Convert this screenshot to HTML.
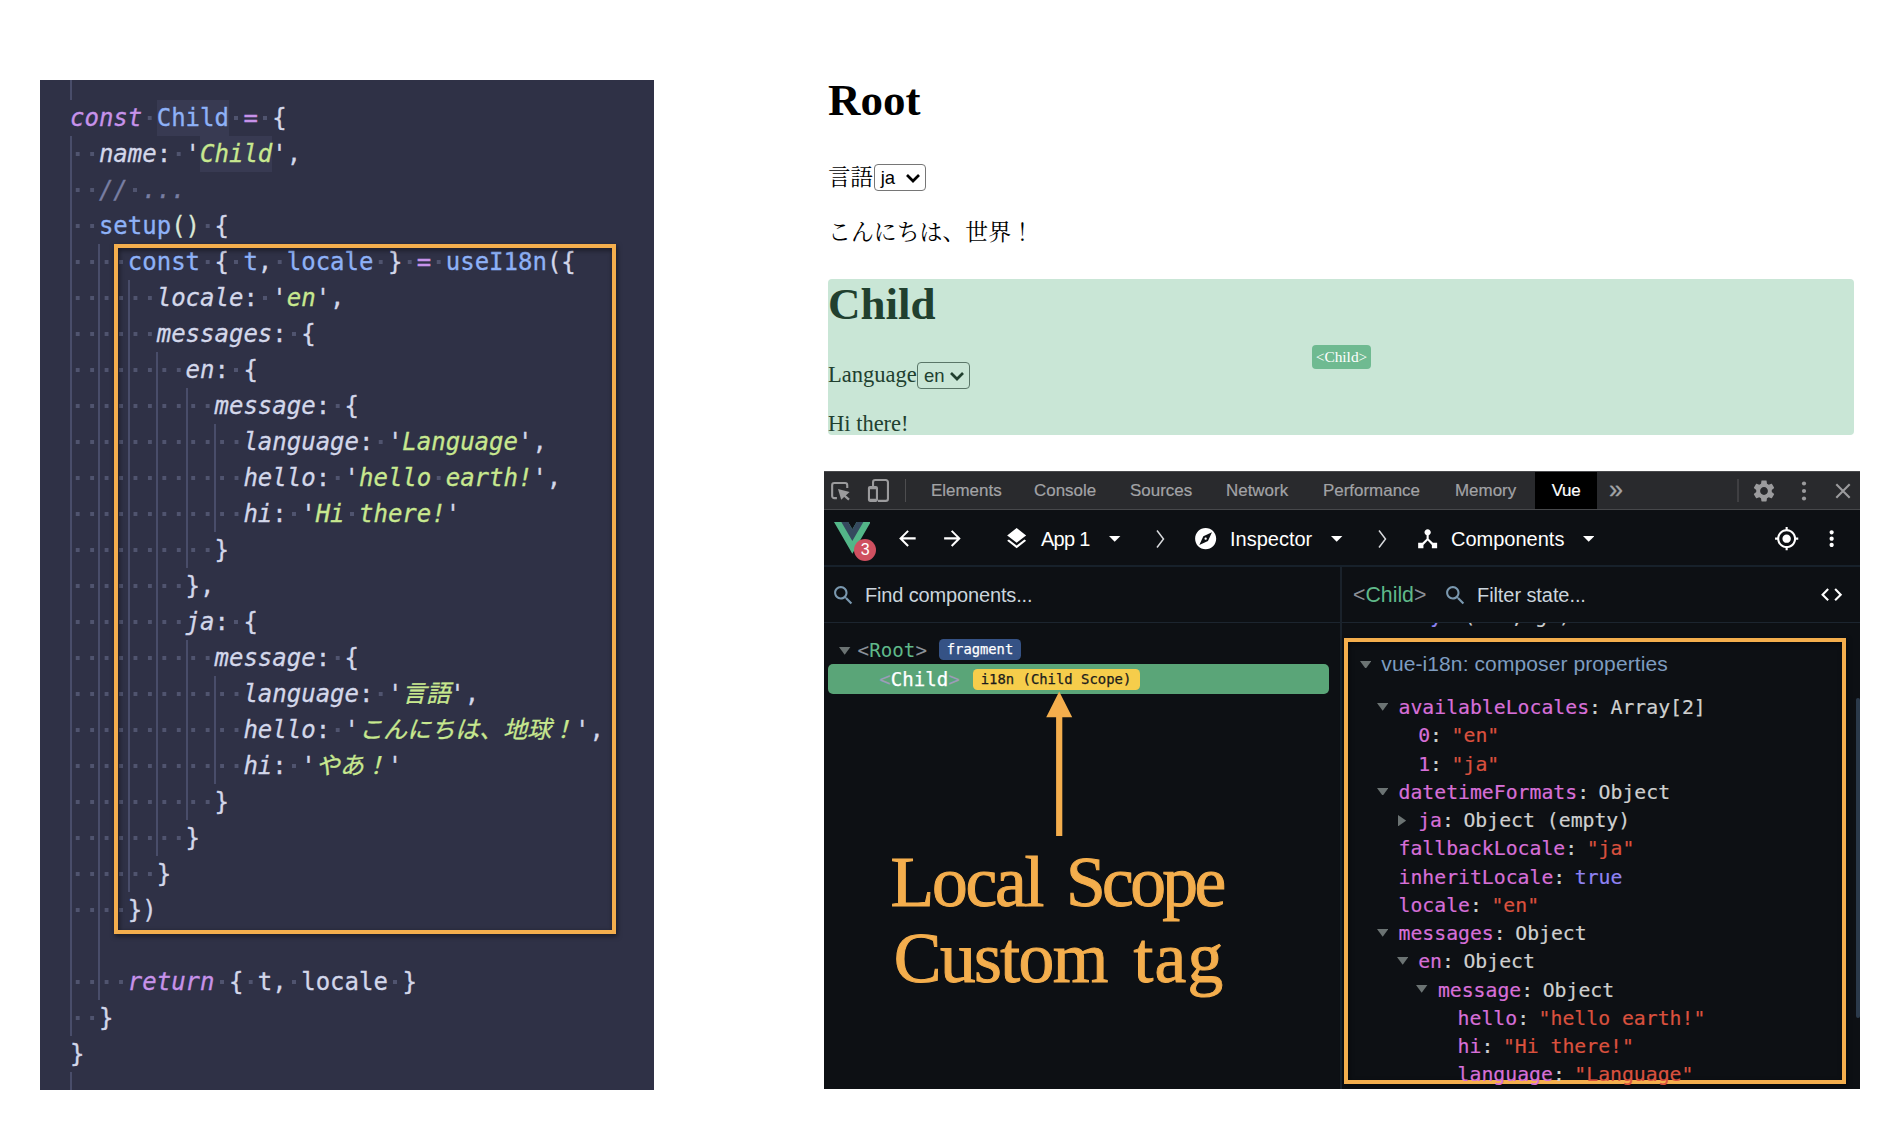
<!DOCTYPE html>
<html lang="en">
<head>
<meta charset="utf-8">
<title>Local Scope Custom tag</title>
<style>
html,body{margin:0;padding:0;background:#fff;}
body{width:1894px;height:1122px;position:relative;overflow:hidden;font-family:"Liberation Sans","Noto Sans CJK JP",sans-serif;}
*{box-sizing:border-box;}
.abs{position:absolute;}
/* ---------- code editor ---------- */
#code{position:absolute;left:40px;top:80px;width:614px;height:1010px;background:#2f3146;overflow:hidden;
  font-family:"DejaVu Sans Mono","Noto Sans CJK JP",monospace;font-size:24px;line-height:36px;color:#d3d7ea;}
#code .ln{position:absolute;left:30px;height:36px;white-space:pre;-webkit-text-stroke-width:0.3px;}
#code .g{position:absolute;width:1.8px;background:#494d6a;display:block;}
#code .d{background:linear-gradient(90deg,transparent 5.3px,#50546f 5.3px,#50546f 9.15px,transparent 9.15px) 0 11.7px / 14.449px 3.9px repeat-x;}
#code .k{color:#c792ea;font-style:italic;}
#code .p{color:#c792ea;}
#code .b{color:#8eb1f7;}
#code .w{color:#d3d7ea;}
#code .i{color:#d3d7ea;font-style:italic;}
#code .s{color:#c8e88f;font-style:italic;}
#code .c{color:#787ea2;font-style:italic;}
#code .pa{color:#dbe8d6;}
#code .hl{background:#383a52;padding:4px 0;}
#code .j{font-size:24px;}
#cbox{position:absolute;left:114px;top:244.3px;width:502px;height:690px;border:4px solid #f4ae4d;filter:drop-shadow(1px 2px 2.5px rgba(0,0,0,.55));}
/* ---------- web page ---------- */
#web{position:absolute;left:828px;top:0;width:1026px;font-family:"Liberation Serif","Noto Serif CJK JP","Noto Serif CJK SC",serif;color:#000;font-size:22.5px;}
#web h1{position:absolute;margin:0;font-size:45px;font-weight:bold;line-height:56px;left:0;}
#web .t{position:absolute;left:0;white-space:nowrap;line-height:30px;}
.sel{position:absolute;width:51.5px;height:26.5px;border:1.5px solid #767676;border-radius:4px;background:#fff;font-family:"Liberation Sans",sans-serif;font-size:18.5px;line-height:25px;color:#000;padding-left:5.5px;}
.sel svg{position:absolute;right:4px;top:7.5px;}
#childbg{position:absolute;left:0;top:279px;width:1026px;height:156px;background:#c9e6d6;border-radius:4px;}
#cbadge{position:absolute;left:484px;top:345px;width:59px;height:24px;background:#6fba91;border-radius:4px;color:#fff;font-size:15.4px;line-height:23px;text-align:center;}
/* ---------- devtools ---------- */
#dt{position:absolute;left:824px;top:471px;width:1036px;height:618px;background:#0d1014;overflow:hidden;color:#fff;}
#tabs{position:absolute;left:0;top:0;width:1036px;height:39px;background:#292a2d;border-bottom:1.5px solid #47484b;font-size:16.95px;color:#a2a3a6;box-shadow:inset 0 1px 0 #48494c;}
#tabs span{-webkit-text-stroke-width:0.2px;position:absolute;top:1.3px;line-height:38px;white-space:nowrap;}
#vtb{position:absolute;left:0;top:39px;width:1036px;height:56.8px;border-bottom:2px solid #17212b;font-size:20px;}
#vtb span{position:absolute;top:1px;line-height:56px;white-space:nowrap;color:#fff;}
#srow{position:absolute;left:0;top:96px;width:1036px;height:56px;border-bottom:1.5px solid #1c252f;font-size:20px;}
#srow span{position:absolute;top:0;line-height:56px;white-space:nowrap;}
#vdiv{position:absolute;left:516px;top:96px;width:2px;height:522px;background:#1a222b;}
.mono{font-family:"DejaVu Sans Mono",monospace;}
#tree{position:absolute;left:0;top:152px;width:516px;height:466px;}
#state{position:absolute;left:518px;top:152px;width:518px;height:466px;overflow:hidden;font-family:"DejaVu Sans Mono",monospace;font-size:19.8px;}
#state .co{margin-right:-2.4px;}
#state .r{position:absolute;white-space:pre;line-height:28px;height:28px;color:#cfd0d0;-webkit-text-stroke-width:0.2px;}
#state .ky{color:#d76fd8;}
#state .st{color:#da513e;}
#state .lt{color:#8f83f2;}
#state .tr{position:absolute;width:0;height:0;border-left:6.5px solid transparent;border-right:6.5px solid transparent;border-top:9px solid #6b7373;}
#state .trr{position:absolute;width:0;height:0;border-top:6.5px solid transparent;border-bottom:6.5px solid transparent;border-left:9px solid #6b7373;}
#sbox{position:absolute;left:520px;top:167px;width:501.6px;height:446px;border:4px solid #f4ae4d;filter:drop-shadow(1px 2px 2.5px rgba(0,0,0,.55));}
.anno{position:absolute;font-family:"Liberation Serif",serif;color:#f4ae4d;font-size:71.5px;line-height:76px;white-space:nowrap;-webkit-text-stroke:1px #f4ae4d;}
</style>
</head>
<body>

<!-- ================= code editor ================= -->
<div id="code">
<i class="g" style="left:30.0px;top:0px;height:20px"></i>
<i class="g" style="left:30.0px;top:56px;height:900px"></i>
<i class="g" style="left:30.0px;top:992px;height:20px"></i>
<i class="g" style="left:58.0px;top:164px;height:756px"></i>
<i class="g" style="left:88.1px;top:200px;height:612px"></i>
<i class="g" style="left:116.3px;top:272px;height:504px"></i>
<i class="g" style="left:146.2px;top:308px;height:180px"></i>
<i class="g" style="left:174.2px;top:344px;height:108px"></i>
<i class="g" style="left:146.2px;top:560px;height:180px"></i>
<i class="g" style="left:174.2px;top:596px;height:108px"></i>
<div class="ln" style="top:20px"><span class="k">const</span><span class="d"> </span><span class="b hl">Child</span><span class="d"> </span><span class="p">=</span><span class="d"> </span><span class="w">{</span></div>
<div class="ln" style="top:56px"><span class="d">  </span><span class="i">name</span><span class="w">:</span><span class="d"> </span><span class="w">'</span><span class="s hl">Child</span><span class="w">',</span></div>
<div class="ln" style="top:92px"><span class="d">  </span><span class="c">//</span><span class="d"> </span><span class="c">...</span></div>
<div class="ln" style="top:128px"><span class="d">  </span><span class="b">setup</span><span class="pa">()</span><span class="d"> </span><span class="w">{</span></div>
<div class="ln" style="top:164px"><span class="d">    </span><span class="b">const</span><span class="d"> </span><span class="w">{</span><span class="d"> </span><span class="b">t</span><span class="w">,</span><span class="d"> </span><span class="b">locale</span><span class="d"> </span><span class="w">}</span><span class="d"> </span><span class="p">=</span><span class="d"> </span><span class="b">useI18n</span><span class="w">({</span></div>
<div class="ln" style="top:200px"><span class="d">      </span><span class="i">locale</span><span class="w">:</span><span class="d"> </span><span class="w">'</span><span class="s">en</span><span class="w">',</span></div>
<div class="ln" style="top:236px"><span class="d">      </span><span class="i">messages</span><span class="w">:</span><span class="d"> </span><span class="w">{</span></div>
<div class="ln" style="top:272px"><span class="d">        </span><span class="i">en</span><span class="w">:</span><span class="d"> </span><span class="w">{</span></div>
<div class="ln" style="top:308px"><span class="d">          </span><span class="i">message</span><span class="w">:</span><span class="d"> </span><span class="w">{</span></div>
<div class="ln" style="top:344px"><span class="d">            </span><span class="i">language</span><span class="w">:</span><span class="d"> </span><span class="w">'</span><span class="s">Language</span><span class="w">',</span></div>
<div class="ln" style="top:380px"><span class="d">            </span><span class="i">hello</span><span class="w">:</span><span class="d"> </span><span class="w">'</span><span class="s">hello</span><span class="d"> </span><span class="s">earth!</span><span class="w">',</span></div>
<div class="ln" style="top:416px"><span class="d">            </span><span class="i">hi</span><span class="w">:</span><span class="d"> </span><span class="w">'</span><span class="s">Hi</span><span class="d"> </span><span class="s">there!</span><span class="w">'</span></div>
<div class="ln" style="top:452px"><span class="d">          </span><span class="w">}</span></div>
<div class="ln" style="top:488px"><span class="d">        </span><span class="w">},</span></div>
<div class="ln" style="top:524px"><span class="d">        </span><span class="i">ja</span><span class="w">:</span><span class="d"> </span><span class="w">{</span></div>
<div class="ln" style="top:560px"><span class="d">          </span><span class="i">message</span><span class="w">:</span><span class="d"> </span><span class="w">{</span></div>
<div class="ln" style="top:596px"><span class="d">            </span><span class="i">language</span><span class="w">:</span><span class="d"> </span><span class="w">'</span><span class="s j">言語</span><span class="w">',</span></div>
<div class="ln" style="top:632px"><span class="d">            </span><span class="i">hello</span><span class="w">:</span><span class="d"> </span><span class="w">'</span><span class="s j">こんにちは、地球！</span><span class="w">',</span></div>
<div class="ln" style="top:668px"><span class="d">            </span><span class="i">hi</span><span class="w">:</span><span class="d"> </span><span class="w">'</span><span class="s j">やあ！</span><span class="w">'</span></div>
<div class="ln" style="top:704px"><span class="d">          </span><span class="w">}</span></div>
<div class="ln" style="top:740px"><span class="d">        </span><span class="w">}</span></div>
<div class="ln" style="top:776px"><span class="d">      </span><span class="w">}</span></div>
<div class="ln" style="top:812px"><span class="d">    </span><span class="w">})</span></div>
<div class="ln" style="top:848px"></div>
<div class="ln" style="top:884px"><span class="d">    </span><span class="k">return</span><span class="d"> </span><span class="w">{</span><span class="d"> </span><span class="w">t,</span><span class="d"> </span><span class="w">locale</span><span class="d"> </span><span class="w">}</span></div>
<div class="ln" style="top:920px"><span class="d">  </span><span class="w">}</span></div>
<div class="ln" style="top:956px"><span class="w">}</span></div>
</div>
<div id="cbox"></div>

<!-- ================= web page ================= -->
<div id="web">
  <h1 style="top:72.4px">Root</h1>
  <div class="t" style="top:163px">言語</div>
  <div class="sel" style="left:46.2px;top:164.3px">ja<svg width="16" height="10" viewBox="0 0 16 10"><path d="M2 2 L8 8 L14 2" fill="none" stroke="#000" stroke-width="2.7"/></svg></div>
  <div class="t" style="top:218.4px;font-size:22.9px">こんにちは、世界！</div>
  <div id="childbg"></div>
  <h1 style="top:276px;color:#21402f">Child</h1>
  <div class="t" style="top:359.8px;color:#21402f">Language</div>
  <div class="sel" style="left:89.4px;top:362.2px;width:52.2px;background:#c9e6d6;border-color:#5a7668;color:#21402f">en<svg width="16" height="10" viewBox="0 0 16 10"><path d="M2 2 L8 8 L14 2" fill="none" stroke="#21402f" stroke-width="2.7"/></svg></div>
  <div class="t" style="top:409.4px;color:#21402f">Hi there!</div>
  <div id="cbadge">&lt;Child&gt;</div>
</div>

<!-- ================= devtools ================= -->
<div id="dt">
  <div id="tabs">

    <svg class="abs" style="left:0;top:0" width="100" height="39" viewBox="0 0 100 39" fill="none" stroke="#9b9b9d" stroke-width="2.1"><path d="M12.9 27.15H10.3A2.15 2.15 0 0 1 8.15 25V14.2A2.15 2.15 0 0 1 10.3 12.05H21.1A2.15 2.15 0 0 1 23.25 14.2V16.9"/><path d="M14 18L25.6 21.1L17.2 28.8Z" fill="#9b9b9d" stroke="none"/><path d="M20.4 24.6L25 28.6" stroke-width="2.3"/><path d="M49.05 15V11.2A2.15 2.15 0 0 1 51.2 9.05H61.8A2.15 2.15 0 0 1 63.95 11.2V27.7A2.15 2.15 0 0 1 61.8 29.85H54"/><path d="M46 15H51.9A2.1 2.1 0 0 1 54 17.1V28.8A2.1 2.1 0 0 1 51.9 30.9H46A2.1 2.1 0 0 1 43.9 28.8V17.1A2.1 2.1 0 0 1 46 15ZM46 18.2V27.7H51.9V18.2Z" fill="#9b9b9d" fill-rule="evenodd" stroke="none"/></svg>
    <i class="abs" style="left:80.8px;top:8.2px;width:1.4px;height:22.7px;background:#4d4d4f"></i>
    <i class="abs" style="left:913.2px;top:8.2px;width:1.4px;height:22.7px;background:#3f3f42"></i>
    <svg class="abs" style="left:927px;top:7px" width="26" height="26" viewBox="0 0 24 24" fill="#9b9b9d"><path d="M19.14 12.94c.04-.3.06-.61.06-.94 0-.32-.02-.64-.07-.94l2.03-1.58c.18-.14.23-.41.12-.61l-1.92-3.32c-.12-.22-.37-.29-.59-.22l-2.39.96c-.5-.38-1.03-.7-1.62-.94l-.36-2.54c-.04-.24-.24-.41-.48-.41h-3.84c-.24 0-.43.17-.47.41l-.36 2.54c-.59.24-1.13.57-1.62.94l-2.39-.96c-.22-.08-.47 0-.59.22L2.74 8.87c-.12.21-.08.47.12.61l2.03 1.58c-.05.3-.09.63-.09.94s.02.64.07.94l-2.03 1.58c-.18.14-.23.41-.12.61l1.92 3.32c.12.22.37.29.59.22l2.39-.96c.5.38 1.03.7 1.62.94l.36 2.54c.05.24.24.41.48.41h3.84c.24 0 .44-.17.47-.41l.36-2.54c.59-.24 1.13-.56 1.62-.94l2.39.96c.22.08.47 0 .59-.22l1.92-3.32c.12-.22.07-.47-.12-.61l-2.01-1.58zM12 15.6c-1.98 0-3.6-1.62-3.6-3.6s1.62-3.6 3.6-3.6 3.6 1.62 3.6 3.6-1.62 3.6-3.6 3.6z"/></svg>
    <svg class="abs" style="left:975px;top:9px" width="10" height="22" viewBox="0 0 10 22" fill="#9b9b9d"><circle cx="5" cy="3.5" r="2.1"/><circle cx="5" cy="11" r="2.1"/><circle cx="5" cy="18.5" r="2.1"/></svg>
    <svg class="abs" style="left:1010px;top:11px" width="18" height="18" viewBox="0 0 18 18" fill="none" stroke="#9b9b9d" stroke-width="2.1"><path d="M2.3 2.3L15.7 15.7M15.7 2.3L2.3 15.7"/></svg>
    <span style="left:107px">Elements</span>
    <span style="left:210px">Console</span>
    <span style="left:306px">Sources</span>
    <span style="left:402px">Network</span>
    <span style="left:499px">Performance</span>
    <span style="left:631px">Memory</span>
    <i class="abs" style="left:711px;top:1px;width:62px;height:37px;background:#000"></i><span style="left:711px;width:62px;color:#fff;text-align:center;letter-spacing:-0.35px">Vue</span>
    <span style="left:785px;font-size:25px;line-height:34px;-webkit-text-stroke:0.3px #a2a3a6">»</span>
  </div>
  <svg class="abs" style="left:9.7px;top:51px" width="36.7" height="31.8" viewBox="0 0 261.76 226.69"><path d="M161.096.001l-30.225 52.351L100.647.001H-.005l130.877 226.688L261.749.001z" fill="#53b688"/><path d="M161.096.001l-30.225 52.351L100.647.001H52.346l78.526 136.01L209.398.001z" fill="#35495e"/></svg>
<div class="abs" style="left:30.2px;top:68.2px;width:22px;height:22px;border-radius:11px;background:#cf5060;color:#fff;font-size:16px;line-height:22px;text-align:center">3</div>
<svg class="abs" style="left:71.3px;top:55.4px" width="24.8" height="24.8" viewBox="0 0 24 24" fill="#fff"><path d="M20 11H7.83l5.59-5.59L12 4l-8 8 8 8 1.41-1.41L7.83 13H20v-2z"/></svg>
<svg class="abs" style="left:116.1px;top:55.4px" width="24.8" height="24.8" viewBox="0 0 24 24" fill="#fff"><path d="M12 4l-1.41 1.41L16.17 11H4v2h12.17l-5.58 5.59L12 20l8-8z"/></svg>
<svg class="abs" style="left:179.6px;top:54.9px" width="25.3" height="25.3" viewBox="0 0 24 24" fill="#fff"><path d="M11.99 18.54l-7.37-5.73L3 14.07l9 7 9-7-1.63-1.27-7.38 5.74zM12 16l7.36-5.73L21 9l-9-7-9 7 1.63 1.27L12 16z"/></svg>
<svg class="abs" style="left:285.3px;top:65.1px" width="11.4" height="5.8" viewBox="0 0 10 5" preserveAspectRatio="none" fill="#fff"><path d="M0 0H10L5 5Z"/></svg>
<svg class="abs" style="left:331.0px;top:57.8px" width="10" height="20" viewBox="0 0 10 20" fill="none" stroke="#d8dadd" stroke-width="1.5"><path d="M2 1.5L8.5 10L2 18.5"/></svg>
<svg class="abs" style="left:369.1px;top:55.1px" width="25.3" height="25.3" viewBox="0 0 24 24" fill="#fff"><path d="M12 10.9c-.61 0-1.1.49-1.1 1.1s.49 1.1 1.1 1.1c.61 0 1.1-.49 1.1-1.1s-.49-1.1-1.1-1.1zM12 2C6.48 2 2 6.48 2 12s4.48 10 10 10 10-4.48 10-10S17.52 2 12 2zm2.19 12.19L6 18l3.81-8.19L18 6l-3.81 8.19z"/></svg>
<svg class="abs" style="left:507.3px;top:65.1px" width="11.4" height="5.8" viewBox="0 0 10 5" preserveAspectRatio="none" fill="#fff"><path d="M0 0H10L5 5Z"/></svg>
<svg class="abs" style="left:552.5px;top:57.8px" width="10" height="20" viewBox="0 0 10 20" fill="none" stroke="#d8dadd" stroke-width="1.5"><path d="M2 1.5L8.5 10L2 18.5"/></svg>
<svg class="abs" style="left:590.9px;top:55.1px" width="25.3" height="25.3" viewBox="0 0 24 24" fill="#fff"><path d="M17 16l-4-4V8.82C14.16 8.4 15 7.3 15 6c0-1.66-1.34-3-3-3S9 4.34 9 6c0 1.3.84 2.4 2 2.82V12l-4 4H3v5h5v-3.05l4-4.2 4 4.2V21h5v-5h-4z"/></svg>
<svg class="abs" style="left:758.7px;top:65.1px" width="11.4" height="5.8" viewBox="0 0 10 5" preserveAspectRatio="none" fill="#fff"><path d="M0 0H10L5 5Z"/></svg>
<svg class="abs" style="left:949.9px;top:54.9px" width="25.3" height="25.3" viewBox="0 0 24 24" fill="#fff"><path d="M12 8c-2.21 0-4 1.79-4 4s1.79 4 4 4 4-1.79 4-4-1.79-4-4-4zm8.94 3c-.46-4.17-3.77-7.48-7.94-7.94V1h-2v2.06C6.83 3.52 3.52 6.83 3.06 11H1v2h2.06c.46 4.17 3.77 7.48 7.94 7.94V23h2v-2.06c4.17-.46 7.48-3.77 7.94-7.94H23v-2h-2.06zM12 19c-3.87 0-7-3.13-7-7s3.13-7 7-7 7 3.13 7 7-3.13 7-7 7z"/></svg>
<svg class="abs" style="left:994.9px;top:54.9px" width="25.3" height="25.3" viewBox="0 0 24 24" fill="#fff"><path d="M12 8c1.1 0 2-.9 2-2s-.9-2-2-2-2 .9-2 2 .9 2 2 2zm0 2c-1.1 0-2 .9-2 2s.9 2 2 2 2-.9 2-2-.9-2-2-2zm0 6c-1.1 0-2 .9-2 2s.9 2 2 2 2-.9 2-2-.9-2-2-2z"/></svg>
  <div id="vtb">
    <span style="left:217px;letter-spacing:-0.75px">App 1</span>
    <span style="left:406px">Inspector</span>
    <span style="left:627px">Components</span>
  </div>
  <div id="srow">
    <span style="left:41px;color:#cbd5dd;letter-spacing:-0.15px">Find components...</span>
    <span style="left:529px;color:#8a8f96;font-size:21.3px">&lt;<b style="font-weight:normal;color:#5fb98a">Child</b>&gt;</span>
    <span style="left:653px;color:#cbd5dd;letter-spacing:-0.08px">Filter state...</span>
  </div>
  <svg class="abs" style="left:6.8px;top:111.9px" width="24.8" height="24.8" viewBox="0 0 24 24" fill="#7a98af"><path d="M15.5 14h-.79l-.28-.27C15.41 12.59 16 11.11 16 9.5 16 5.91 13.09 3 9.5 3S3 5.91 3 9.5 5.91 16 9.5 16c1.61 0 3.09-.59 4.23-1.57l.27.28v.79l5 4.99L20.49 19l-4.99-5zm-6 0C7.01 14 5 11.99 5 9.5S7.01 5 9.5 5 14 7.01 14 9.5 11.99 14 9.5 14z"/></svg>
<svg class="abs" style="left:618.8px;top:111.9px" width="24.8" height="24.8" viewBox="0 0 24 24" fill="#7a98af"><path d="M15.5 14h-.79l-.28-.27C15.41 12.59 16 11.11 16 9.5 16 5.91 13.09 3 9.5 3S3 5.91 3 9.5 5.91 16 9.5 16c1.61 0 3.09-.59 4.23-1.57l.27.28v.79l5 4.99L20.49 19l-4.99-5zm-6 0C7.01 14 5 11.99 5 9.5S7.01 5 9.5 5 14 7.01 14 9.5 11.99 14 9.5 14z"/></svg>
<svg class="abs" style="left:994.9px;top:111.1px" width="25.3" height="25.3" viewBox="0 0 24 24" fill="#fff"><path d="M9.4 16.6L4.8 12l4.6-4.6L8 6l-6 6 6 6 1.4-1.4zm5.2 0l4.6-4.6-4.6-4.6L16 6l6 6-6 6-1.4-1.4z"/></svg>
  <div id="vdiv"></div>
  <div id="tree">
    <svg class="abs" style="left:15.4px;top:23.8px" width="11.4" height="7.8" viewBox="0 0 10 7" preserveAspectRatio="none" fill="#6b7373"><path d="M0 0H10L5 7Z"/></svg>
    <span class="abs mono" style="left:33.6px;top:14px;font-size:19.2px;line-height:28px;color:#8a9199;white-space:pre">&lt;<b style="font-weight:normal;color:#5fb98a">Root</b>&gt;</span>
    <span class="abs mono" style="left:115px;top:16px;width:82px;height:21px;border-radius:4.5px;background:#355285;color:#fff;-webkit-text-stroke:0.25px #fff;font-size:13.8px;line-height:21px;text-align:center">fragment</span>
    <div class="abs" style="left:4px;top:41px;width:501px;height:30px;border-radius:5px;background:#5aa578"></div>
    <span class="abs mono" style="left:55.3px;top:42px;font-size:19.1px;line-height:30px;color:#fff;white-space:pre;-webkit-text-stroke:0.25px #fff"><b style="font-weight:normal;color:#9c9cb8;-webkit-text-stroke:0">&lt;</b>Child<b style="font-weight:normal;color:#9c9cb8;-webkit-text-stroke:0">&gt;</b></span>
    <span class="abs mono" style="left:148.5px;top:46px;width:167px;height:21px;border-radius:4.5px;background:#f6cd4b;color:#1c1c1c;-webkit-text-stroke:0.25px #1c1c1c;font-size:13.9px;line-height:21px;text-align:center">i18n (Child Scope)</span>
    <svg class="abs" style="left:215px;top:68px" width="40" height="146" viewBox="0 0 40 146"><path d="M20.2 0.5L33.2 26.3H23.3V145H17.1V26.3H7.2Z" fill="#f4ae4d"/></svg>
  </div>
  <div id="sbox"></div>
  <div id="state">
<div class="r" style="left:52.5px;top:-20.4px"> <span class="lt">kay</span><span class="co">:</span> (one, g.)</div>
<svg class="abs" style="left:18px;top:37.5px" width="11.4" height="7.8" viewBox="0 0 10 7" preserveAspectRatio="none" fill="#6b7373"><path d="M0 0H10L5 7Z"/></svg>
<div class="abs" style="left:39.3px;top:27px;font-family:'Liberation Sans',sans-serif;font-size:21px;letter-spacing:0.1px;line-height:28px;color:#7d9cc0;white-space:nowrap">vue-i18n: composer properties</div>
<svg class="abs" style="left:35.0px;top:80.0px" width="11.4" height="7.8" viewBox="0 0 10 7" preserveAspectRatio="none" fill="#6b7373"><path d="M0 0H10L5 7Z"/></svg>
<div class="r" style="left:56.5px;top:71.2px"><span class="ky">availableLocales</span><span class="co">:</span> Array[2]</div>
<div class="r" style="left:76.2px;top:99.4px"><span class="ky">0</span><span class="co">:</span> <span class="st">"en"</span></div>
<div class="r" style="left:76.2px;top:127.7px"><span class="ky">1</span><span class="co">:</span> <span class="st">"ja"</span></div>
<svg class="abs" style="left:35.0px;top:164.7px" width="11.4" height="7.8" viewBox="0 0 10 7" preserveAspectRatio="none" fill="#6b7373"><path d="M0 0H10L5 7Z"/></svg>
<div class="r" style="left:56.5px;top:155.9px"><span class="ky">datetimeFormats</span><span class="co">:</span> Object</div>
<svg class="abs" style="left:55.8px;top:191.7px" width="8.2" height="11.4" viewBox="0 0 7 10" preserveAspectRatio="none" fill="#6b7373"><path d="M0 0V10L7 5Z"/></svg>
<div class="r" style="left:76.2px;top:184.1px"><span class="ky">ja</span><span class="co">:</span> Object (empty)</div>
<div class="r" style="left:56.5px;top:212.4px"><span class="ky">fallbackLocale</span><span class="co">:</span> <span class="st">"ja"</span></div>
<div class="r" style="left:56.5px;top:240.6px"><span class="ky">inheritLocale</span><span class="co">:</span> <span class="lt">true</span></div>
<div class="r" style="left:56.5px;top:268.8px"><span class="ky">locale</span><span class="co">:</span> <span class="st">"en"</span></div>
<svg class="abs" style="left:35.0px;top:305.8px" width="11.4" height="7.8" viewBox="0 0 10 7" preserveAspectRatio="none" fill="#6b7373"><path d="M0 0H10L5 7Z"/></svg>
<div class="r" style="left:56.5px;top:297.0px"><span class="ky">messages</span><span class="co">:</span> Object</div>
<svg class="abs" style="left:54.7px;top:334.1px" width="11.4" height="7.8" viewBox="0 0 10 7" preserveAspectRatio="none" fill="#6b7373"><path d="M0 0H10L5 7Z"/></svg>
<div class="r" style="left:76.2px;top:325.3px"><span class="ky">en</span><span class="co">:</span> Object</div>
<svg class="abs" style="left:74.4px;top:362.3px" width="11.4" height="7.8" viewBox="0 0 10 7" preserveAspectRatio="none" fill="#6b7373"><path d="M0 0H10L5 7Z"/></svg>
<div class="r" style="left:95.9px;top:353.5px"><span class="ky">message</span><span class="co">:</span> Object</div>
<div class="r" style="left:115.6px;top:381.7px"><span class="ky">hello</span><span class="co">:</span> <span class="st">"hello earth!"</span></div>
<div class="r" style="left:115.6px;top:410.0px"><span class="ky">hi</span><span class="co">:</span> <span class="st">"Hi there!"</span></div>
<div class="r" style="left:115.6px;top:438.2px"><span class="ky">language</span><span class="co">:</span> <span class="st">"Language"</span></div>
<i class="abs" style="left:513.5px;top:75px;width:4.5px;height:320px;background:#2b3a4b;border-radius:2px"></i>
  </div>
</div>
<div class="anno" style="top:844.2px;left:890.5px;letter-spacing:-2.25px">Local</div>
<div class="anno" style="top:844.2px;left:1066px;letter-spacing:-3.65px">Scope</div>
<div class="anno" style="top:920.4px;left:893.8px;letter-spacing:-1.6px">Custom</div>
<div class="anno" style="top:920.4px;left:1133.5px;letter-spacing:1.2px">tag</div>

</body>
</html>
